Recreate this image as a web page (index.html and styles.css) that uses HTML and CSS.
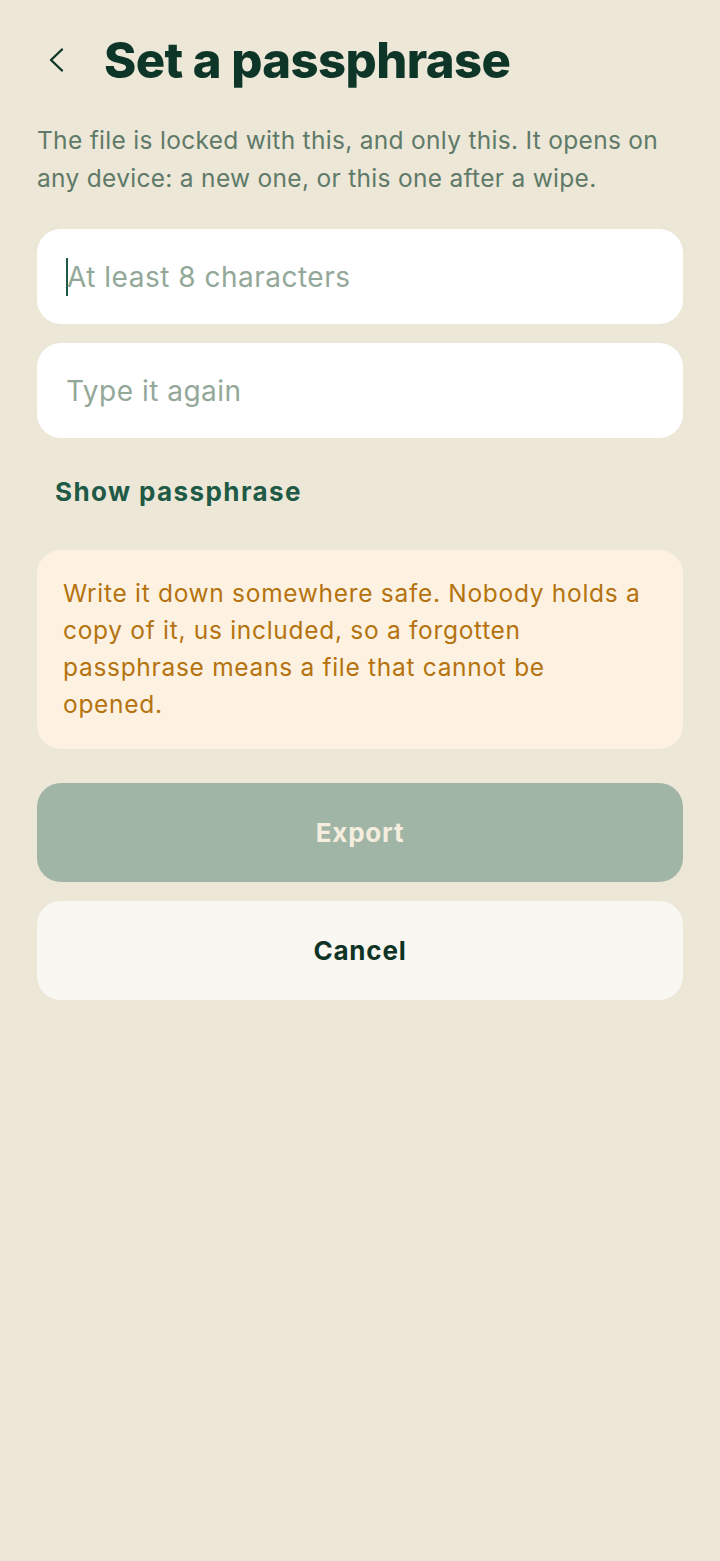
FILE: index.html
```html
<!DOCTYPE html>
<html>
  <head>
    <meta charset="UTF-8" />
    <title>Set a passphrase</title>
    <link rel="stylesheet" href="styles.css">
  </head>

  <body>
    <div id="content">
      <div class="header">
        <button class="backButton" aria-label="Back">
          <svg width="28" height="28" viewBox="0 0 28 28" fill="none" stroke="#0d3528" stroke-width="2.4" stroke-linecap="round" stroke-linejoin="round">
            <path d="M18 3.5 L7 14 L18 24.5" />
          </svg>
        </button>
        <h1>Set a passphrase</h1>
      </div>

      <p class="intro">
        The file is locked with this, and only this. It opens on any device: a
        new one, or this one after a wipe.
      </p>

      <div class="field">
        <span class="caret"></span><span class="placeholder">At least 8 characters</span>
      </div>
      <div class="field">
        <span class="placeholder">Type it again</span>
      </div>

      <div class="showToggle">Show passphrase</div>

      <div class="warning">
        Write it down somewhere safe. Nobody holds a copy of it, us included, so
        a forgotten passphrase means a file that cannot be opened.
      </div>

      <button class="action exportButton">Export</button>
      <button class="action cancelButton">Cancel</button>
    </div>
  </body>
</html>
```

FILE: styles.css
```css
html,
body {
  margin: 0;
  background-color: #ede7d8;
}

#content {
  padding: 0 37px;
  font-family: Inter, "Noto Sans", sans-serif;
}

.header {
  display: flex;
  align-items: center;
  height: 64px;
  padding-top: 28px;
}

.backButton {
  width: 28px;
  height: 28px;
  margin-left: 7px;
  padding: 0;
  border: none;
  background: none;
  display: flex;
}

h1 {
  margin: 0 0 0 32px;
  font-size: 49px;
  font-weight: 800;
  letter-spacing: -0.6px;
  color: #0d3528;
}

.intro {
  margin: 29px 0 32px;
  font-size: 24.5px;
  line-height: 38px;
  color: #5f7a69;
  letter-spacing: 0.3px;
}

.field {
  height: 95px;
  border-radius: 24px;
  background-color: #fff;
  margin-bottom: 19px;
  padding-left: 29px;
  display: flex;
  align-items: center;
  font-size: 28px;
  letter-spacing: 0.5px;
  color: #93a899;
}

.caret {
  width: 2px;
  height: 38px;
  margin-right: -1px;
  background-color: #1e5a45;
}

.showToggle {
  margin: 38px 0 43px 18px;
  font-size: 26px;
  font-weight: 700;
  color: #1e5a45;
  letter-spacing: 1.4px;
}

.warning {
  background-color: #fdf2e1;
  border-radius: 24px;
  padding: 25px 37px 26px 26px;
  font-size: 24.5px;
  line-height: 37px;
  color: #b5730f;
  letter-spacing: 0.7px;
}

.action {
  display: block;
  width: 100%;
  height: 99px;
  border: none;
  border-radius: 24px;
  font-family: Inter, "Noto Sans", sans-serif;
  font-size: 26px;
  font-weight: 700;
  letter-spacing: 0.8px;
}

.exportButton {
  margin-top: 34px;
  background-color: #a1b5a6;
  color: #f5eedf;
}

.cancelButton {
  margin-top: 19px;
  background-color: #f9f7f1;
  color: #0f3325;
}
```
